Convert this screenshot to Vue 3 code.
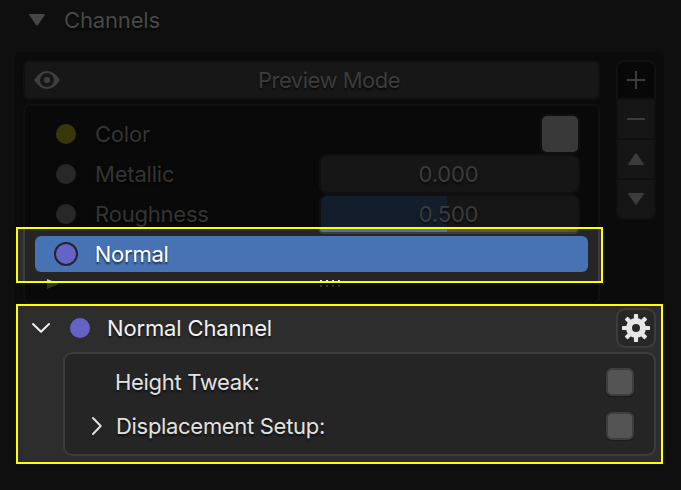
<script setup>
const channels = [
  { name: 'Color', dot: 'olive', kind: 'swatch' },
  { name: 'Metallic', dot: 'gray', kind: 'field', value: '0.000', fill: 0 },
  { name: 'Roughness', dot: 'gray', kind: 'field', value: '0.500', fill: 126 },
]
</script>

<template>
  <div class="page">
    <header class="heading">
      <svg class="tri" width="16" height="12" viewBox="0 0 16 12"><path d="M.7 0h14.6q.9.3.5 1.100L9 11q-1 1.600-2 0L.2 1.100Q-.2.300.7 0z" fill="#464646" /></svg>
      <span>Channels</span>
    </header>

    <section class="panel">
      <div class="main">
        <div class="preview">
          <svg class="eye" width="26" height="18" viewBox="0 0 26 18">
            <path fill-rule="evenodd" d="M0 9Q6 0 13 0t13 9q-6 9-13 9T0 9zM13 2a7 7 0 1 0 0 14a7 7 0 0 0 0-14z" fill="#3f3f3f" />
            <circle cx="13" cy="9" r="3.100" fill="#3f3f3f" />
          </svg>
          <span>Preview Mode</span>
        </div>
        <div class="list">
          <div v-for="c in channels" :key="c.name" class="row">
            <i class="dot" :class="c.dot"></i>
            <span class="name">{{ c.name }}</span>
            <b v-if="c.kind === 'swatch'" class="swatch"></b>
            <div v-else class="field">
              <i v-if="c.fill" class="fill" :style="{ width: c.fill + 'px' }"></i>
              <span>{{ c.value }}</span>
            </div>
          </div>
          <div class="foot">
            <svg width="13" height="10" viewBox="0 0 13 10"><path d="M0 0l12 5L0 10z" fill="#303030" /></svg>
            <svg class="grip" width="20" height="8" viewBox="0 0 20 8"><path d="M0 6h2v2H0zM6 6h2v2H6zM12 6h2v2h-2zM18 6h2v2h-2z" fill="#333" /></svg>
          </div>
        </div>
      </div>
      <div class="tools">
        <div class="tool add"><svg width="18" height="18" viewBox="0 0 18 18"><path d="M9 0v18M0 9h18" stroke="#3c3c3c" stroke-width="2" /></svg></div>
        <div class="tool"><svg width="18" height="18" viewBox="0 0 18 18"><path d="M0 9h18" stroke="#3c3c3c" stroke-width="2" /></svg></div>
        <div class="tool"><svg width="16" height="12" viewBox="0 0 16 12"><path d="M.7 12h14.600q.9-.3.5-1.100L9 1q-1-1.600-2 0L.2 10.900q-.4.8.5 1.100z" fill="#3c3c3c" /></svg></div>
        <div class="tool"><svg width="16" height="12" viewBox="0 0 16 12"><path d="M.7 0h14.600q.9.3.5 1.100L9 11q-1 1.600-2 0L.2 1.100Q-.2.300.7 0z" fill="#3c3c3c" /></svg></div>
      </div>
    </section>

    <section class="details">
      <div class="title">
        <svg class="down" width="20" height="12" viewBox="0 0 20 12"><path d="M2 2l8 7.700L18 2" fill="none" stroke="#efefef" stroke-width="2" stroke-linecap="round" stroke-linejoin="round" /></svg>
        <i class="dot violet"></i>
        <span>Normal Channel</span>
        <div class="gear">
          <svg width="28" height="28" viewBox="-14 -14 28 28">
            <circle r="7" fill="none" stroke="#e6e6e6" stroke-width="6" />
            <g fill="#e6e6e6">
              <rect v-for="n in 8" :key="n" x="-2.100" y="-14" width="4.200" height="6" rx=".7" :transform="`rotate(${(n - 1) * 45})`" />
            </g>
          </svg>
        </div>
      </div>
      <div class="box">
        <div class="option">
          <span class="label">Height Tweak:</span>
          <b class="check"></b>
        </div>
        <div class="option">
          <svg class="right" width="12" height="20" viewBox="0 0 12 20"><path d="M2 2l7.700 8L2 18" fill="none" stroke="#e0e0e0" stroke-width="2" stroke-linecap="round" stroke-linejoin="round" /></svg>
          <span class="label wide">Displacement Setup:</span>
          <b class="check"></b>
        </div>
      </div>
    </section>

    <div class="spot">
      <div class="spot-list">
        <div class="edge"><i></i></div>
        <div class="selected">
          <i class="dot ring"></i>
          <span>Normal</span>
        </div>
        <div class="spot-foot">
          <svg width="13" height="2" viewBox="0 0 13 2"><path d="M0 0l5 2H0z" fill="#d0d0d0" /></svg>
          <svg class="grip" width="20" height="1" viewBox="0 0 20 1"><path d="M0 0h2v1H0zM6 0h2v1H6zM12 0h2v1h-2zM18 0h2v1h-2z" fill="#e6e6e6" /></svg>
        </div>
      </div>
    </div>
  </div>
</template>

<style>
body { background: #0f0f0f; }
</style>

<style scoped>
* { box-sizing: border-box; }
svg { display: block; flex: none; }
.page {
  position: relative;
  width: 681px;
  height: 490px;
  overflow: hidden;
  background: #0f0f0f;
  color: #343434;
  font: 22px/26px Inter, sans-serif;
  letter-spacing: -.15px;
  text-shadow: 0 2px 2px rgba(0, 0, 0, .6);
}
.heading { display: flex; align-items: center; height: 52px; padding: 0 0 12px 29px; color: #484848; }
.heading span { margin-left: 19px; }
.panel {
  display: flex;
  align-items: flex-start;
  width: 649px;
  height: 252px;
  margin-left: 15px;
  padding: 8px;
  gap: 16px;
  border-radius: 6px 6px 0 0;
  background: #0b0b0b;
}
.main { width: 577px; }
.preview {
  display: flex;
  align-items: center;
  height: 40px;
  border: 2px solid #111;
  border-radius: 7px;
  background: #171717;
  color: #3c3c3c;
}
.eye { margin-left: 9px; }
.preview span { flex: 1; text-align: center; letter-spacing: -.5px; }
.list {
  height: 200px;
  margin-top: 4px;
  padding: 8px 18px 0 31px;
  border: 2px solid #101010;
  border-radius: 7px;
  background: #090909;
}
.row { display: flex; align-items: center; height: 40px; }
.dot { flex: none; width: 20px; height: 20px; border-radius: 50%; }
.olive { background: #38370c; }
.gray { background: #282828; }
.violet { background: #6663c7; }
.name { flex: 1; margin-left: 19px; letter-spacing: -.2px; }
.swatch { width: 40px; height: 40px; border: 2px solid #101010; border-radius: 7px; background: #393939; }
.field {
  position: relative;
  display: flex;
  justify-content: center;
  align-items: center;
  width: 261px;
  height: 40px;
  padding-right: 2px;
  border: 2px solid #101010;
  border-radius: 8px;
  background: #161616;
  color: #3c3c3c;
  overflow: hidden;
}
.field span { position: relative; }
.fill { position: absolute; left: 0; top: 0; bottom: 0; background: #131d2c; }
.foot { display: flex; padding: 45px 0 0; margin-left: -9px; }
.foot .grip { margin-left: 260px; }
.tools { width: 40px; border: 2px solid #111; border-radius: 8px; overflow: hidden; background: #111; }
.tool { display: flex; align-items: center; justify-content: center; height: 38px; margin-bottom: 2px; background: #161616; }
.tool.add { height: 36px; background: #080808; }
.tool:last-child { margin: 0; height: 38px; }

.details {
  width: 647px;
  height: 160px;
  margin-left: 16px;
  padding: 2px 5px 0 13px;
  border: 2px solid #ff0;
  background: #2d2d2d;
  color: #f2f2f2;
}
.title { display: flex; align-items: center; height: 40px; }
.title .dot { margin-left: 19.4px; }
.title span { flex: 1; margin-left: 16.6px; }
.gear { display: grid; place-items: center; width: 40px; height: 40px; border: 2px solid #3d3d3d; border-radius: 9px; background: #272727; }
.box {
  width: 593px;
  height: 104px;
  margin: 4px 0 0 32px;
  padding: 8px 20px 0 26px;
  border: 2px solid #3d3d3d;
  border-radius: 9px;
  background: #252525;
  color: #e2e2e2;
}
.option { display: flex; align-items: center; height: 40px; margin-bottom: 4px; letter-spacing: -.31px; }
.label { flex: 1; margin-left: 24px; }
.label.wide { margin-left: 13px; }
.check { width: 28px; height: 28px; border: 2px solid #3d3d3d; border-radius: 6px; background: #545454; box-shadow: 0 1px 1px #1c1c1c; }

.spot {
  position: absolute;
  left: 16px;
  top: 227px;
  width: 587px;
  height: 56px;
  padding: 0 1px 0 5px;
  border: 2px solid #ff0;
  background: #2d2d2d;
}
.spot-list { width: 577px; height: 52px; padding: 0 10px; border: solid #3d3d3d; border-width: 0 2px; background: #252525; }
.edge {
  width: 261px;
  height: 5px;
  margin: 0 0 0 283px;
  border: 2px solid #3d3d3d;
  border-top: 0;
  border-radius: 0 0 7px 7px;
  background: #545454;
  overflow: hidden;
}
.edge i { display: block; width: 127px; height: 3px; background: #4772b3; }
.selected { display: flex; align-items: center; height: 36px; margin-top: 2px; border-radius: 6px; background: #4772b3; color: #fff; }
.ring { width: 24px; height: 24px; margin: 0 0 1px 19.4px; border: 2px solid #22242b; background: #6663c7; }
.selected span { margin-left: 16.4px; letter-spacing: -.25px; }
.spot-foot { display: flex; padding: 7px 0 0 12px; }
.spot-foot .grip { margin: 1px 0 0 260px; }
</style>
